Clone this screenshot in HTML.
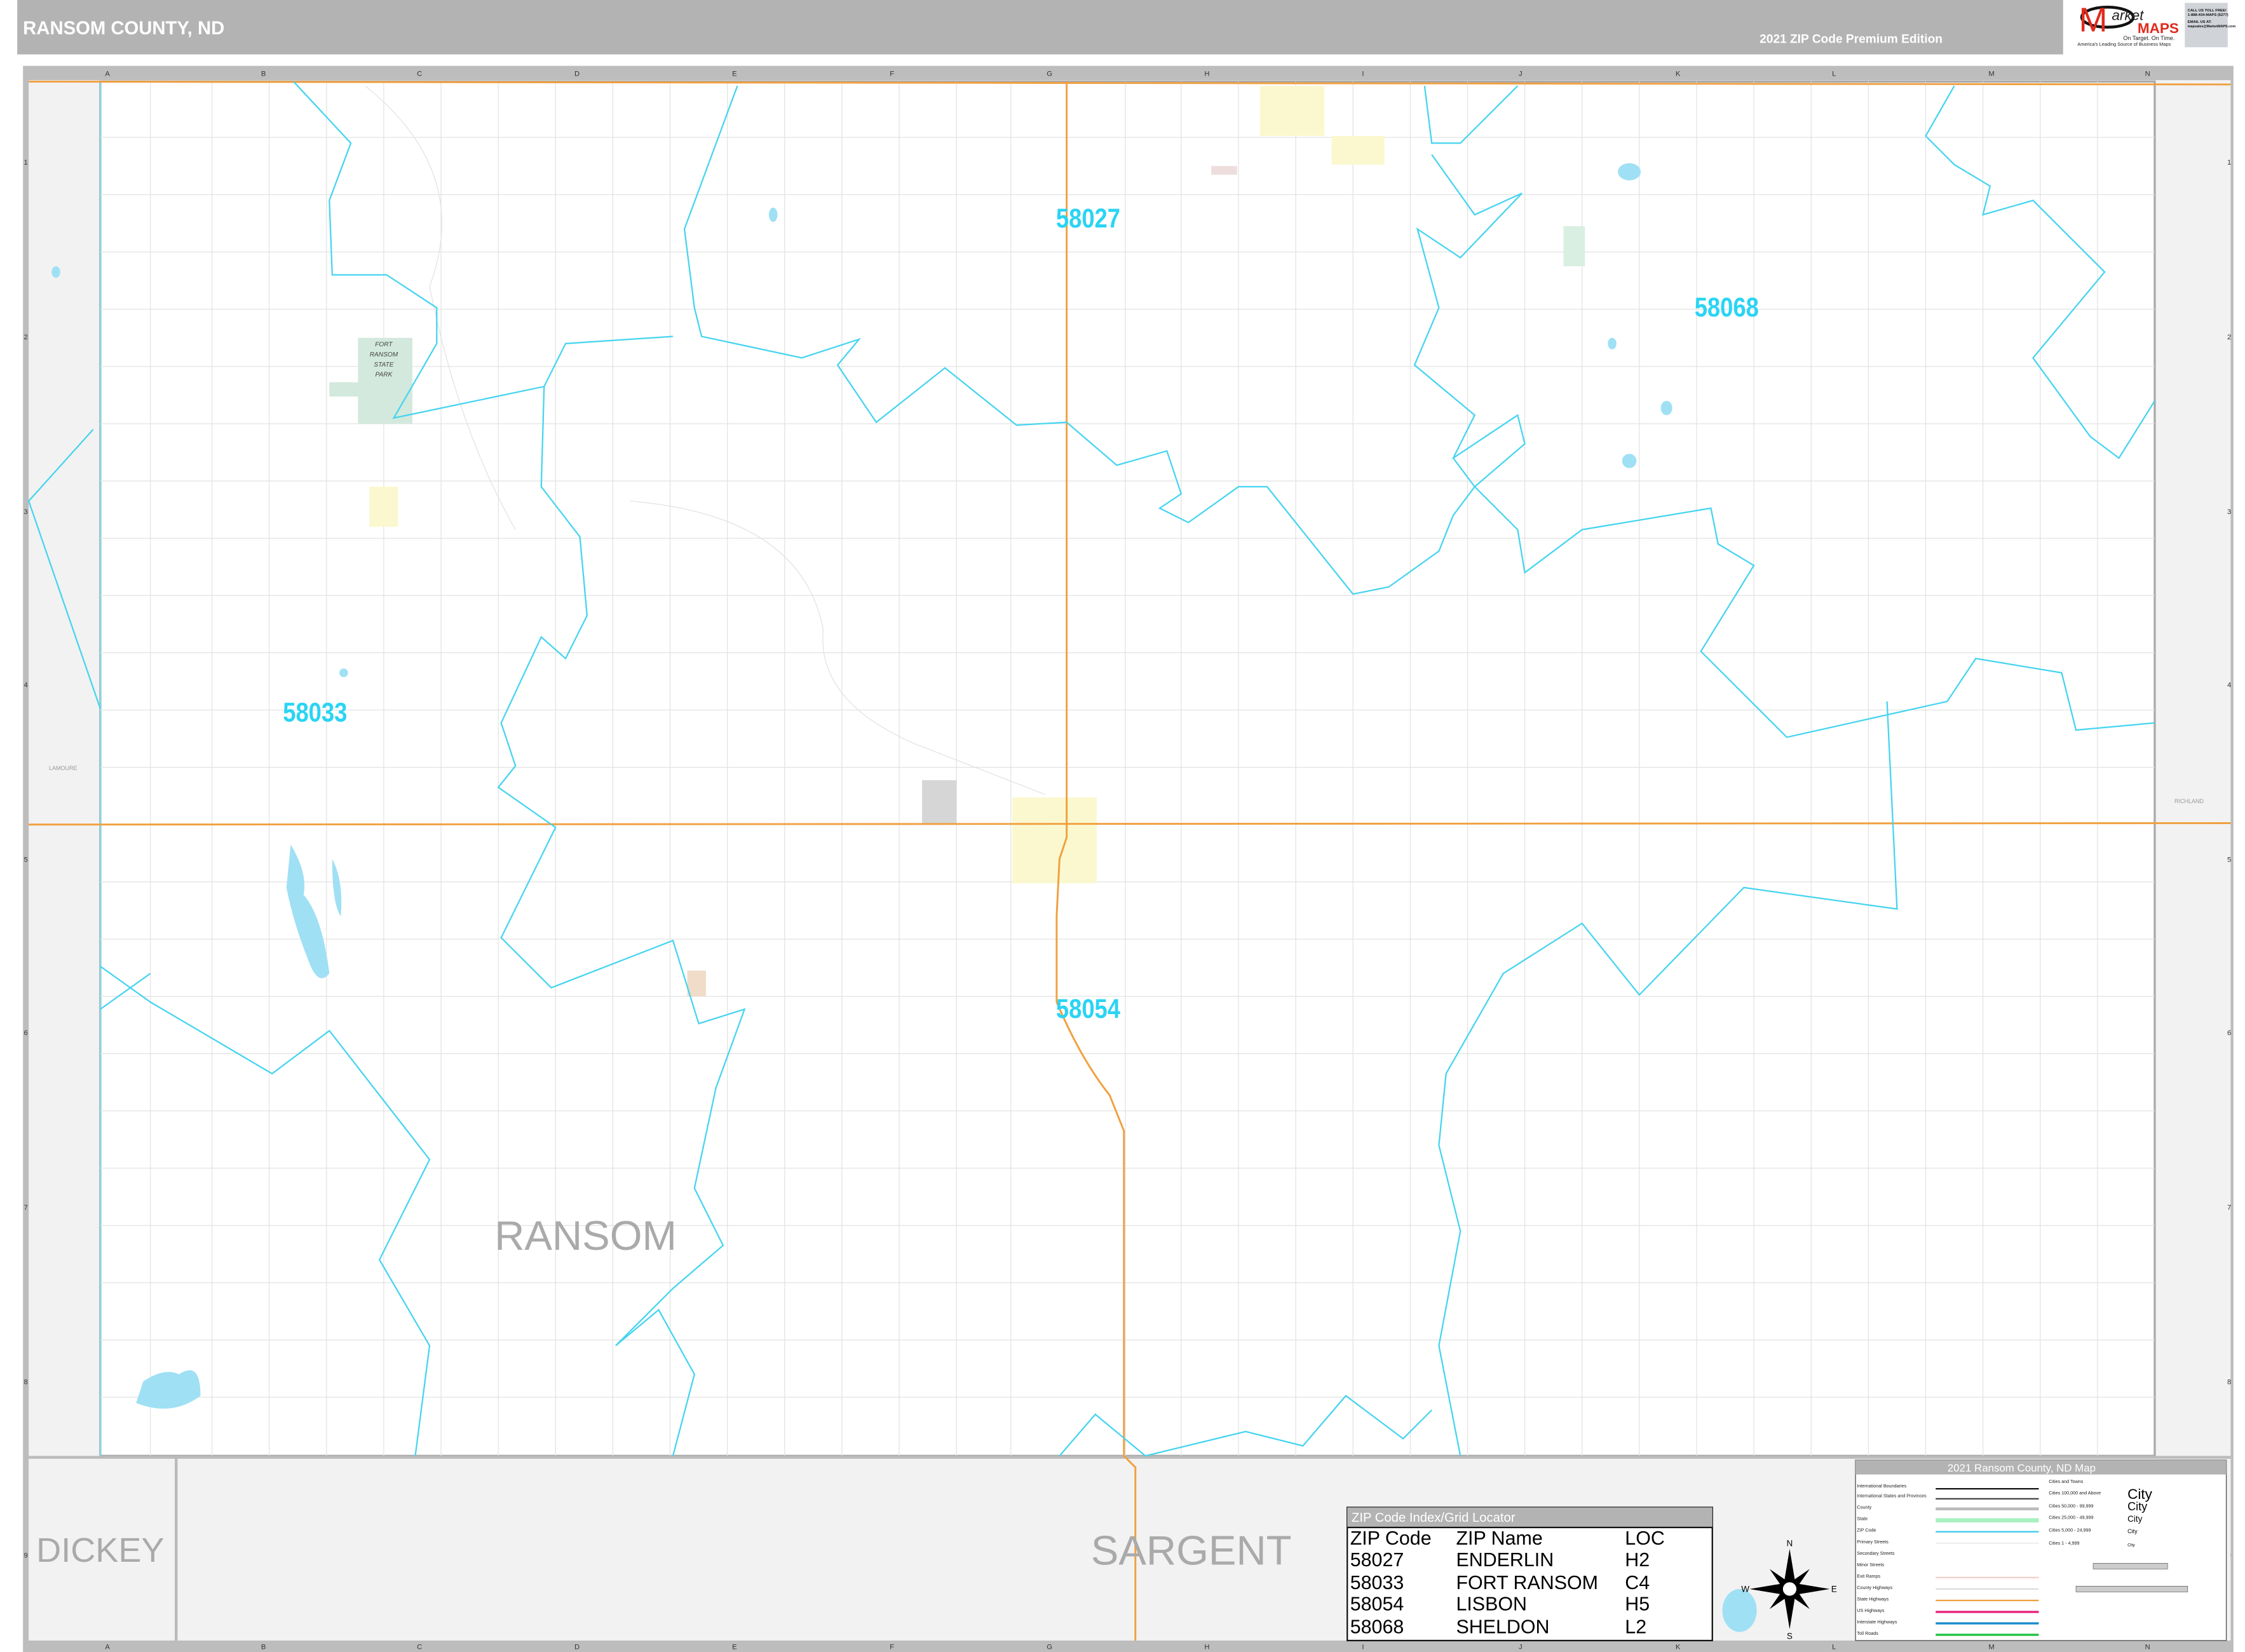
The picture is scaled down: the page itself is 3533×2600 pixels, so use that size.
<!DOCTYPE html>
<html><head><meta charset="utf-8"><style>
html,body{margin:0;padding:0;background:#fff;}
svg{display:block;}
text{font-family:"Liberation Sans",Arial,sans-serif;}
</style></head><body>
<svg width="3533" height="2600" viewBox="0 0 1568 1154" xmlns="http://www.w3.org/2000/svg">
<rect width="1568" height="1154" fill="#fff"/>
<!-- header -->
<rect x="12" y="0" width="1429" height="38" fill="#b3b3b3"/>
<text x="16" y="24" font-size="13" font-weight="bold" fill="#fff">RANSOM COUNTY, ND</text>
<text x="1229" y="30" font-size="8.5" font-weight="bold" fill="#fff">2021 ZIP Code Premium Edition</text>
<!-- logo -->
<ellipse cx="1472" cy="12" rx="18" ry="7" fill="none" stroke="#111" stroke-width="2"/>
<text x="1452" y="22" font-size="24" fill="#e02a1c" font-family="Liberation Serif">M</text>
<text x="1475" y="14" font-size="10" fill="#222" font-style="italic" font-family="Liberation Serif">arket</text>
<text x="1493" y="23" font-size="10" font-weight="bold" fill="#e02a1c">MAPS</text>
<text x="1483" y="28" font-size="4" fill="#222" font-family="Liberation Serif">On Target. On Time.</text>
<text x="1451" y="32" font-size="3.3" fill="#222" font-family="Liberation Serif">America's Leading Source of Business Maps</text>
<rect x="1526" y="2" width="30" height="31" fill="#d0d3d8"/>
<text x="1528" y="8" font-size="2.6" font-weight="bold" fill="#111">CALL US TOLL FREE!</text>
<text x="1528" y="11" font-size="2.6" font-weight="bold" fill="#111">1-888-434-MAPS (6277)</text>
<text x="1528" y="16" font-size="2.6" font-weight="bold" fill="#111">EMAIL US AT:</text>
<text x="1528" y="19" font-size="2.4" font-weight="bold" fill="#111">mapsales@MarketMAPS.com</text>
<!-- frame rulers -->
<rect x="16" y="46" width="1544" height="1108" fill="#bdbdbd"/>
<rect x="20" y="56" width="1538" height="1090" fill="#f2f2f2"/>
<g font-size="5" fill="#333" text-anchor="middle">
<text x="75" y="53">A</text><text x="184" y="53">B</text><text x="293" y="53">C</text><text x="403" y="53">D</text><text x="513" y="53">E</text><text x="623" y="53">F</text><text x="733" y="53">G</text><text x="843" y="53">H</text><text x="952" y="53">I</text><text x="1062" y="53">J</text><text x="1172" y="53">K</text><text x="1281" y="53">L</text><text x="1391" y="53">M</text><text x="1500" y="53">N</text>
<text x="75" y="1152">A</text><text x="184" y="1152">B</text><text x="293" y="1152">C</text><text x="403" y="1152">D</text><text x="513" y="1152">E</text><text x="623" y="1152">F</text><text x="733" y="1152">G</text><text x="843" y="1152">H</text><text x="952" y="1152">I</text><text x="1062" y="1152">J</text><text x="1172" y="1152">K</text><text x="1281" y="1152">L</text><text x="1391" y="1152">M</text><text x="1500" y="1152">N</text>
<text x="18" y="115">1</text><text x="18" y="237">2</text><text x="18" y="359">3</text><text x="18" y="480">4</text><text x="18" y="602">5</text><text x="18" y="723">6</text><text x="18" y="845">7</text><text x="18" y="967">8</text><text x="18" y="1088">9</text>
<text x="1557" y="115">1</text><text x="1557" y="237">2</text><text x="1557" y="359">3</text><text x="1557" y="480">4</text><text x="1557" y="602">5</text><text x="1557" y="723">6</text><text x="1557" y="845">7</text><text x="1557" y="967">8</text><text x="1557" y="1088">9</text>
</g>
<!-- county -->
<rect x="70" y="57" width="1435" height="960" fill="#fff" stroke="#aaa" stroke-width="1.5"/>
<!-- bottom neighbor -->
<rect x="20" y="1018" width="1538" height="128" fill="#f2f2f2"/>
<line x1="20" y1="1018" x2="1558" y2="1018" stroke="#bbb" stroke-width="2"/>
<line x1="123" y1="1018" x2="123" y2="1146" stroke="#bbb" stroke-width="2"/>
<line x1="70" y1="57" x2="70" y2="1017" stroke="#7fd8ee" stroke-width="1"/>
<!-- grid roads -->
<g stroke="#e2e2e2" stroke-width="0.55">
<line x1="105" y1="57" x2="105" y2="1017"/><line x1="148" y1="57" x2="148" y2="1017"/><line x1="188" y1="57" x2="188" y2="1017"/><line x1="228" y1="57" x2="228" y2="1017"/><line x1="268" y1="57" x2="268" y2="1017"/><line x1="308" y1="57" x2="308" y2="1017"/><line x1="348" y1="57" x2="348" y2="1017"/><line x1="388" y1="57" x2="388" y2="1017"/><line x1="428" y1="57" x2="428" y2="1017"/><line x1="468" y1="57" x2="468" y2="1017"/><line x1="508" y1="57" x2="508" y2="1017"/><line x1="548" y1="57" x2="548" y2="1017"/><line x1="588" y1="57" x2="588" y2="1017"/><line x1="628" y1="57" x2="628" y2="1017"/><line x1="668" y1="57" x2="668" y2="1017"/><line x1="706" y1="57" x2="706" y2="1017"/><line x1="786" y1="57" x2="786" y2="1017"/><line x1="825" y1="57" x2="825" y2="1017"/><line x1="865" y1="57" x2="865" y2="1017"/><line x1="905" y1="57" x2="905" y2="1017"/><line x1="945" y1="57" x2="945" y2="1017"/><line x1="985" y1="57" x2="985" y2="1017"/><line x1="1025" y1="57" x2="1025" y2="1017"/><line x1="1065" y1="57" x2="1065" y2="1017"/><line x1="1105" y1="57" x2="1105" y2="1017"/><line x1="1145" y1="57" x2="1145" y2="1017"/><line x1="1185" y1="57" x2="1185" y2="1017"/><line x1="1225" y1="57" x2="1225" y2="1017"/><line x1="1265" y1="57" x2="1265" y2="1017"/><line x1="1305" y1="57" x2="1305" y2="1017"/><line x1="1345" y1="57" x2="1345" y2="1017"/><line x1="1385" y1="57" x2="1385" y2="1017"/><line x1="1425" y1="57" x2="1425" y2="1017"/><line x1="1465" y1="57" x2="1465" y2="1017"/>
<line x1="70" y1="96" x2="1505" y2="96"/><line x1="70" y1="136" x2="1505" y2="136"/><line x1="70" y1="176" x2="1505" y2="176"/><line x1="70" y1="216" x2="1505" y2="216"/><line x1="70" y1="256" x2="1505" y2="256"/><line x1="70" y1="296" x2="1505" y2="296"/><line x1="70" y1="336" x2="1505" y2="336"/><line x1="70" y1="376" x2="1505" y2="376"/><line x1="70" y1="416" x2="1505" y2="416"/><line x1="70" y1="456" x2="1505" y2="456"/><line x1="70" y1="496" x2="1505" y2="496"/><line x1="70" y1="536" x2="1505" y2="536"/><line x1="70" y1="616" x2="1505" y2="616"/><line x1="70" y1="656" x2="1505" y2="656"/><line x1="70" y1="696" x2="1505" y2="696"/><line x1="70" y1="736" x2="1505" y2="736"/><line x1="70" y1="776" x2="1505" y2="776"/><line x1="70" y1="816" x2="1505" y2="816"/><line x1="70" y1="856" x2="1505" y2="856"/><line x1="70" y1="896" x2="1505" y2="896"/><line x1="70" y1="936" x2="1505" y2="936"/><line x1="70" y1="976" x2="1505" y2="976"/>
<path d="M440,350 Q560,360 575,440 Q570,490 640,520 L730,555" fill="none"/>
<path d="M255,60 Q330,120 300,200 Q320,300 360,370" fill="none"/>
</g>
<!-- towns -->
<rect x="707" y="557" width="59" height="60" fill="#fbf8cf"/>
<rect x="644" y="545" width="24" height="30" fill="#d6d6d6"/>
<rect x="880" y="60" width="45" height="35" fill="#fbf8cf"/>
<rect x="930" y="95" width="37" height="20" fill="#fbf8cf"/>
<rect x="1092" y="158" width="15" height="28" fill="#d9efe2"/>
<rect x="250" y="236" width="38" height="60" fill="#d3e9dd"/>
<rect x="230" y="267" width="22" height="10" fill="#d3e9dd"/>
<rect x="258" y="340" width="20" height="28" fill="#fbf8cf"/>
<rect x="480" y="678" width="13" height="18" fill="#f0dcc8"/>
<rect x="846" y="116" width="18" height="6" fill="#edd"/>
<g font-size="4.5" fill="#444" font-style="italic" text-anchor="middle"><text x="268" y="242">FORT</text><text x="268" y="249">RANSOM</text><text x="268" y="256">STATE</text><text x="268" y="263">PARK</text></g>
<!-- lakes -->
<g fill="#9fe0f5">
<path d="M203,590 Q215,610 212,625 Q225,640 230,680 Q222,690 215,670 Q205,645 200,620 Z"/>
<path d="M232,600 Q240,615 238,640 Q232,632 232,600 Z"/>
<path d="M100,965 Q115,955 125,960 Q140,950 140,975 Q120,990 95,980 Z"/>
<ellipse cx="1138" cy="120" rx="8" ry="6"/><ellipse cx="1138" cy="322" rx="5" ry="5"/><ellipse cx="1164" cy="285" rx="4" ry="5"/><ellipse cx="1126" cy="240" rx="3" ry="4"/><ellipse cx="540" cy="150" rx="3" ry="5"/><ellipse cx="39" cy="190" rx="3" ry="4"/><ellipse cx="1215" cy="1125" rx="12" ry="15"/><ellipse cx="240" cy="470" rx="3" ry="3"/>
</g>
<!-- highways -->
<g fill="none" stroke="#f0a040" stroke-width="1.3">
<path d="M20,576 L1558,575"/>
<path d="M745,57 L745,585 L740,600 L738,640 L738,700 Q755,740 775,765 L785,790 L785,1017 L793,1025 L793,1146"/>
<path d="M20,57 L1558,59"/>
</g>
<!-- zip boundaries -->
<g fill="none" stroke="#45d4f0" stroke-width="1">
<polyline points="995,60 1000,100 1020,100 1060,60"/>
<polyline points="1000,108 1030,150 1063,135 1020,180 990,160 1005,215 988,255 1030,290 1015,320 1030,340 1060,370 1065,400 1105,370 1195,355 1200,380 1225,395 1188,455 1248,515 1360,490 1380,460 1440,470 1450,510 1505,505"/>
<polyline points="1015,320 1060,290 1065,310 1030,340"/>
<polyline points="515,60 478,160 485,215 490,235 560,250 600,237 585,255 612,295 660,257 710,297 745,295 780,325 815,315 825,345 810,355 830,365 865,340 885,340 945,415 970,410 1005,385 1015,360 1030,340"/>
<polyline points="205,57 245,100 230,140 232,192 270,192 305,215 305,240 275,292 380,270 395,240 470,235"/>
<polyline points="380,270 378,340 405,375 410,430 395,460 378,445 350,505 360,535 348,550 388,578 350,655 385,690 470,657 488,715 520,705 500,760 485,830 505,870 470,900 430,940 460,915 485,960 470,1017"/>
<polyline points="1318,490 1325,635 1218,620 1145,695 1105,645 1050,680 1010,750 1005,800 1020,860 1005,940 1020,1017"/>
<polyline points="1345,95 1365,60"/>
<polyline points="1345,95 1365,115 1390,130 1385,150 1420,140 1470,190 1420,250 1460,305 1480,320 1505,280"/>
<polyline points="70,495 20,350 65,300"/>
<polyline points="70,675 105,700 190,750 230,720 300,810 265,880 300,940 290,1017"/>
<polyline points="70,705 105,680"/>
<polyline points="740,1017 765,988 800,1017 870,1000 910,1010 940,975 980,1005 1000,985"/>
</g>
<!-- labels -->
<g font-size="19" font-weight="bold" fill="#2ad4f4" text-anchor="middle">
<text transform="translate(760,159) scale(0.85,1)">58027</text><text transform="translate(1206,221) scale(0.85,1)">58068</text><text transform="translate(220,504) scale(0.85,1)">58033</text><text transform="translate(760,711) scale(0.85,1)">58054</text>
</g>
<text x="409" y="873" font-size="29" fill="#aaa" text-anchor="middle">RANSOM</text>
<text x="70" y="1091" font-size="24" fill="#aaa" text-anchor="middle">DICKEY</text>
<text x="832" y="1093" font-size="29" fill="#aaa" text-anchor="middle">SARGENT</text>
<text x="44" y="538" font-size="4" fill="#999" text-anchor="middle">LAMOURE</text>
<text x="1529" y="561" font-size="4" fill="#999" text-anchor="middle">RICHLAND</text>
<!-- ZIP table -->
<rect x="941" y="1053" width="255" height="93" fill="#fff" stroke="#111" stroke-width="1"/>
<rect x="941" y="1053" width="255" height="14" fill="#b3b3b3"/>
<line x1="941" y1="1067" x2="1196" y2="1067" stroke="#111" stroke-width="1"/>
<text x="944" y="1063" font-size="9" fill="#fff">ZIP Code Index/Grid Locator</text>
<g font-size="13.5" fill="#000">
<text x="943" y="1079">ZIP Code</text><text x="1017" y="1079">ZIP Name</text><text x="1135" y="1079">LOC</text>
<text x="943" y="1094">58027</text><text x="1017" y="1094">ENDERLIN</text><text x="1135" y="1094">H2</text>
<text x="943" y="1110">58033</text><text x="1017" y="1110">FORT RANSOM</text><text x="1135" y="1110">C4</text>
<text x="943" y="1125">58054</text><text x="1017" y="1125">LISBON</text><text x="1135" y="1125">H5</text>
<text x="943" y="1141">58068</text><text x="1017" y="1141">SHELDON</text><text x="1135" y="1141">L2</text>
</g>
<!-- compass -->
<g transform="translate(1250,1110)">
<path d="M0,-28 L4,-4 L0,0 L-4,-4 Z M0,28 L4,4 L0,0 L-4,4 Z M-28,0 L-4,-4 L0,0 L-4,4 Z M28,0 L4,-4 L0,0 L4,4 Z" fill="#000"/>
<path d="M-14,-14 L2,-3 L-3,2 Z M14,14 L-2,3 L3,-2 Z M14,-14 L3,2 L-2,-3 Z M-14,14 L-3,-2 L2,3 Z" fill="#000"/>
<circle r="5" fill="#fff" stroke="#000" stroke-width="0.6"/>
<g font-size="6" text-anchor="middle"><text y="-30">N</text><text y="35">S</text><text x="-31" y="2">W</text><text x="31" y="2">E</text></g>
</g>
<!-- legend -->
<rect x="1296" y="1020" width="259" height="126" fill="#fff" stroke="#555" stroke-width="0.6"/>
<rect x="1296" y="1020" width="259" height="10" fill="#b3b3b3"/>
<text x="1412" y="1028" font-size="7.5" fill="#fff" text-anchor="middle">2021 Ransom County, ND Map</text>
<g font-size="3.2" fill="#222">
<text x="1297" y="1039">International Boundaries</text><text x="1297" y="1046">International States and Provinces</text><text x="1297" y="1054">County</text><text x="1297" y="1062">State</text><text x="1297" y="1070">ZIP Code</text><text x="1297" y="1078">Primary Streets</text><text x="1297" y="1086">Secondary Streets</text><text x="1297" y="1094">Minor Streets</text><text x="1297" y="1102">Exit Ramps</text><text x="1297" y="1110">County Highways</text><text x="1297" y="1118">State Highways</text><text x="1297" y="1126">US Highways</text><text x="1297" y="1134">Interstate Highways</text><text x="1297" y="1142">Toll Roads</text>
<text x="1431" y="1036">Cities and Towns</text><text x="1431" y="1044">Cities 100,000 and Above</text><text x="1431" y="1053">Cities 50,000 - 99,999</text><text x="1431" y="1061">Cities 25,000 - 49,999</text><text x="1431" y="1070">Cities 5,000 - 24,999</text><text x="1431" y="1079">Cities 1 - 4,999</text>
</g>
<g font-size="10" fill="#000"><text x="1486" y="1047">City</text></g>
<text x="1486" y="1055" font-size="8">City</text><text x="1486" y="1063" font-size="6">City</text><text x="1486" y="1071" font-size="4">City</text><text x="1486" y="1080" font-size="3">City</text>
<g stroke-width="1">
<line x1="1352" y1="1040" x2="1424" y2="1040" stroke="#111"/><line x1="1352" y1="1047" x2="1424" y2="1047" stroke="#444"/>
<line x1="1352" y1="1054" x2="1424" y2="1054" stroke="#bbb" stroke-width="2"/><line x1="1352" y1="1062" x2="1424" y2="1062" stroke="#a8f0c0" stroke-width="3"/>
<line x1="1352" y1="1070" x2="1424" y2="1070" stroke="#38c8ec"/><line x1="1352" y1="1078" x2="1424" y2="1078" stroke="#eee"/>
<line x1="1352" y1="1102" x2="1424" y2="1102" stroke="#f0d0c8"/><line x1="1352" y1="1110" x2="1424" y2="1110" stroke="#ddd"/>
<line x1="1352" y1="1118" x2="1424" y2="1118" stroke="#f0a040"/><line x1="1352" y1="1126" x2="1424" y2="1126" stroke="#e8207a" stroke-width="1.5"/>
<line x1="1352" y1="1134" x2="1424" y2="1134" stroke="#1a8ad0" stroke-width="1.5"/><line x1="1352" y1="1142" x2="1424" y2="1142" stroke="#20c040" stroke-width="1.5"/>
</g>
<rect x="1462" y="1092" width="52" height="4" fill="#ccc" stroke="#555" stroke-width="0.3"/>
<rect x="1450" y="1108" width="78" height="4" fill="#ccc" stroke="#555" stroke-width="0.3"/>
</svg>
</body></html>
